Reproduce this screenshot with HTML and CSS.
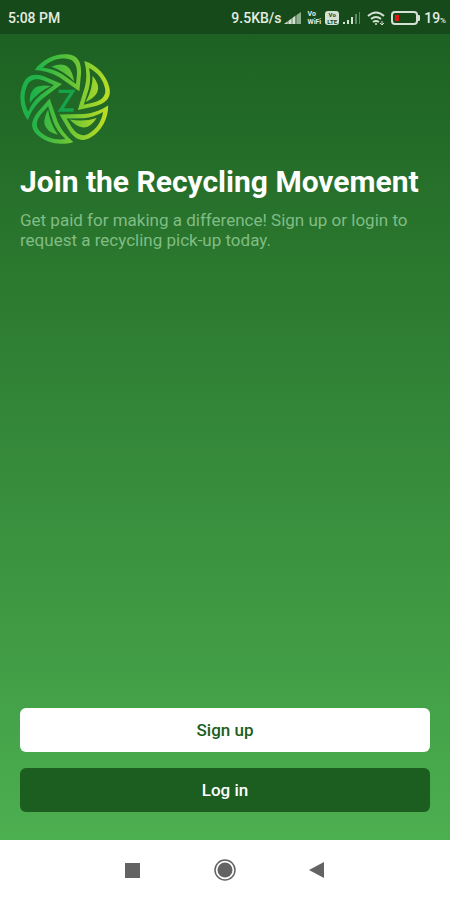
FILE: index.html
```html
<!DOCTYPE html>
<html lang="en">
<head>
    <meta charset="UTF-8">
    <meta name="viewport" content="width=device-width, initial-scale=1.0">
    <title>Join the Recycling Movement</title>
    <link rel="stylesheet" href="styles.css">
</head>
<body>

    <div class="screen">
        <header class="status-bar">
            <span class="time">5:08 PM</span>
            <div class="status-icons">
                <span class="speed">9.5KB/s</span>
                <svg class="signal" width="18" height="14" viewBox="0 0 18 14">
                    <path d="M0 13L11 5V13z" fill="#d5e2d3"/>
                    <path d="M11 5L17 1V13H11z" fill="#8fb08e"/>
                    <path d="M4 6v8M8 3v11M12 1v13" stroke="#174a1a" stroke-width=".6"/>
                </svg>
                <span class="vowifi"><span>Vo</span><span>WiFi</span></span>
                <span class="volte"><span>Vo</span><span>LTE</span></span>
                <svg class="signal-second" width="18" height="14" viewBox="0 0 18 14">
                    <path d="M0 13h2v-2H0zM4 13h2v-4H4zM8 13h2V6H8z" fill="#d5e2d3"/>
                    <path d="M12 13h2V3h-2zM16 13h1V1h-1z" fill="#5d8a5e"/>
                </svg>
                <svg class="wifi" width="18" height="14" viewBox="0 0 18 14" fill="none" stroke="#d5e2d3" stroke-width="2">
                    <path d="M1 5Q9-2 17 5M4 8q5-4 10 0M6 11q3-2 6 0"/>
                    <circle cx="9" cy="13" r="1" fill="#d5e2d3" stroke="none"/>
                    <path d="M15 10v4M13 12l2 2 2-2" stroke-width="1"/>
                </svg>
                <svg class="battery" width="30" height="14" viewBox="0 0 30 14">
                    <rect x="1" y="1" width="25" height="12" rx="3" fill="none" stroke="#d5e2d3" stroke-width="2"/>
                    <rect x="26" y="4" width="3" height="6" rx="1" fill="#d5e2d3"/>
                    <rect x="4" y="4" width="4" height="6" fill="#e3170f"/>
                </svg>
                <span class="percent">19<small>%</small></span>
            </div>
        </header>

        <main class="welcome">
            <svg class="logo" viewBox="30 28 273 273" role="img" aria-label="Z">
                <defs>
                    <linearGradient id="leaf" gradientUnits="userSpaceOnUse" x1="70" y1="160" x2="290" y2="180">
                        <stop offset="0" stop-color="#1fb24a"/>
                        <stop offset="0.5" stop-color="#66c437"/>
                        <stop offset="1" stop-color="#b9dc24"/>
                    </linearGradient>
                    <mask id="blades" maskUnits="userSpaceOnUse" x="20" y="20" width="300" height="300">
                        <g id="blade">
                            <path d="M74 76C98 42 138 26 172 29C204 32 215 52 213 88L208 140L148 98Q116 78 74 76Z" fill="#fff"/>
                            <path d="M98 69C122 46 146 40 170 42C192 44 202 60 201 88L198 118L156 88Q130 72 98 69Z" fill="#000"/>
                            <path d="M124 66Q158 52 176 69Q188 81 192 110Q162 78 124 66Z" fill="#fff"/>
                        </g>
                        <use href="#blade" transform="rotate(72 167 165)"/>
                        <use href="#blade" transform="rotate(144 167 165)"/>
                        <use href="#blade" transform="rotate(216 167 165)"/>
                        <use href="#blade" transform="rotate(288 167 165)"/>
                    </mask>
                </defs>
                <rect x="20" y="20" width="300" height="300" fill="url(#leaf)" mask="url(#blades)"/>
                <path d="M146 140h42l-36 56h39" fill="none" stroke="#16a34a" stroke-width="10"/>
            </svg>
            <h1>Join the Recycling Movement</h1>
            <p class="description">Get paid for making a difference! Sign up or login to request a recycling pick-up today.</p>

            <div class="actions">
                <button class="signup" type="button">Sign up</button>
                <button class="login" type="button">Log in</button>
            </div>
        </main>

        <nav class="system-nav" aria-label="System navigation">
            <button type="button" aria-label="Recent apps">
                <svg width="24" height="24" viewBox="0 0 24 24"><rect x="4" y="5" width="15" height="15" fill="#636363"/></svg>
            </button>
            <button type="button" aria-label="Home">
                <svg width="24" height="24" viewBox="0 0 24 24">
                    <circle cx="12" cy="12" r="10" fill="none" stroke="#636363" stroke-width="1.5"/>
                    <circle cx="12" cy="12" r="7.5" fill="#636363"/>
                </svg>
            </button>
            <button type="button" aria-label="Back">
                <svg width="24" height="24" viewBox="0 0 24 24"><path d="M4 12L19 4v16z" fill="#636363"/></svg>
            </button>
        </nav>
    </div>

</body>
</html>
```
FILE: styles.css
```css
/* General styling */
body {
    margin: 0;
    font-family: Roboto, sans-serif;
    color: #ffffff;
}

.screen {
    display: flex;
    flex-direction: column;
    min-height: 100vh;
    background: linear-gradient(#1b5e20, #4caf50 calc(100% - 60px));
}

/* Status bar */
.status-bar {
    display: flex;
    align-items: center;
    justify-content: space-between;
    height: 32px;
    padding: 2px 4px 0 8px;
    background-color: #174a1a;
    color: #e3ece2;
    font-size: 14px;
    font-weight: 500;
}

.status-icons {
    display: flex;
    align-items: center;
}

.signal {
    margin: 0 6px 0 2px;
}

.vowifi,
.volte {
    display: flex;
    flex-direction: column;
    font-size: 7px;
    line-height: 8px;
    font-weight: 700;
}

.volte {
    align-items: center;
    width: 14px;
    margin: 0 4px;
    border-radius: 3px;
    background-color: #d5e2d3;
    color: #174a1a;
    font-size: 6px;
    line-height: 7px;
}

.wifi {
    margin: 0 6px;
}

.battery {
    margin-right: 3px;
}

.percent small {
    font-size: 8px;
}

/* Welcome content */
.welcome {
    display: flex;
    flex: 1;
    flex-direction: column;
    padding: 20px 20px 28px;
}

.logo {
    width: 91px;
    height: 91px;
}

h1 {
    margin: 19px 0 0;
    font-size: 30px;
    line-height: 36px;
    font-weight: 700;
}

.description {
    margin: 10px 0 0;
    font-size: 17px;
    line-height: 20px;
    color: #81bd84;
}

.actions {
    display: flex;
    flex-direction: column;
    gap: 16px;
    margin-top: auto;
}

.actions button {
    height: 44px;
    border: none;
    border-radius: 6px;
    font-family: inherit;
    font-size: 17px;
    font-weight: 500;
    cursor: pointer;
}

.actions .signup {
    background-color: #ffffff;
    color: #1b5e20;
}

.actions .login {
    background-color: #1b5e20;
    color: #ffffff;
}

/* System navigation */
.system-nav {
    display: flex;
    align-items: center;
    justify-content: center;
    gap: 68px;
    height: 60px;
    background-color: #ffffff;
}

.system-nav button {
    display: flex;
    padding: 0;
    border: none;
    background: none;
    cursor: pointer;
}
```
